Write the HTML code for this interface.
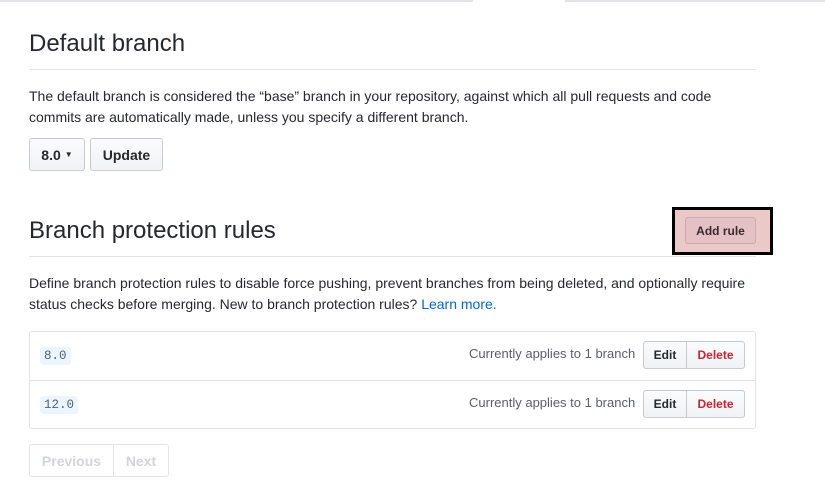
<!DOCTYPE html>
<html><head><style>
body{margin:0;width:825px;height:496px;background:#fff;font-family:"Liberation Sans",sans-serif;color:#24292e;position:relative;overflow:hidden}
.a{position:absolute}
.topbar{top:0;height:2px;background:#e1e4e8}
h2{position:absolute;margin:0;font-weight:400;font-size:24px;left:29px}
.hr{position:absolute;left:29px;width:727px;height:1px;background:#e1e4e8}
p{position:absolute;margin:0;left:29px;width:730px;font-size:14px;line-height:21px}
.btn{position:absolute;box-sizing:border-box;border:1px solid rgba(27,31,35,.2);border-radius:3px;background:linear-gradient(#fafbfc,#eff3f6);font-weight:bold;font-size:14px;display:flex;align-items:center;justify-content:center}
.sm{font-size:12px}
code{font-family:"Liberation Mono",monospace;font-size:12.5px;background:#eaf5ff;color:#586069;padding:2px 4px;border-radius:3px}
</style></head><body>
<div class="a topbar" style="left:0;width:473px"></div>
<div class="a topbar" style="left:565px;width:260px"></div>
<h2 style="top:30px">Default branch</h2>
<div class="hr" style="top:69px"></div>
<p style="top:86px">The default branch is considered the “base” branch in your repository, against which all pull requests and code commits are automatically made, unless you specify a different branch.</p>
<div class="btn" style="left:29px;top:138px;width:56px;height:33px">8.0 <span style="font-size:8px;margin-left:4px">▼</span></div>
<div class="btn" style="left:90px;top:138px;width:73px;height:33px">Update</div>
<h2 style="top:217px">Branch protection rules</h2>
<div class="hr" style="top:256px"></div>
<div class="a" style="left:672px;top:207px;width:101px;height:48px;box-sizing:border-box;border:3px solid #000;background:#ecc9c9"></div>
<div class="btn sm" style="left:685px;top:217px;width:71px;height:27px;background:#e3c1c4;border-color:#cfa9ad;color:#3a2a2e">Add rule</div>
<p style="top:273px">Define branch protection rules to disable force pushing, prevent branches from being deleted, and optionally require status checks before merging. New to branch protection rules? <span style="color:#0366d6">Learn more.</span></p>
<div class="a" style="left:29px;top:331px;width:727px;height:98px;box-sizing:border-box;border:1px solid #e1e4e8;border-radius:3px"></div>
<div class="a" style="left:30px;top:380px;width:725px;height:1px;background:#e1e4e8"></div>
<div class="a" style="left:40px;top:346px"><code>8.0</code></div>
<div class="a" style="left:40px;top:395px"><code>12.0</code></div>
<div class="a" style="left:469px;top:346px;font-size:13px;color:#586069">Currently applies to 1 branch</div>
<div class="a" style="left:469px;top:395px;font-size:13px;color:#586069">Currently applies to 1 branch</div>
<div class="btn sm" style="left:643px;top:341px;width:44px;height:28px;border-radius:3px 0 0 3px">Edit</div>
<div class="btn sm" style="left:686px;top:341px;width:59px;height:28px;border-radius:0 3px 3px 0;color:#cb2431">Delete</div>
<div class="btn sm" style="left:643px;top:390px;width:44px;height:28px;border-radius:3px 0 0 3px">Edit</div>
<div class="btn sm" style="left:686px;top:390px;width:59px;height:28px;border-radius:0 3px 3px 0;color:#cb2431">Delete</div>
<div class="btn" style="left:29px;top:444px;width:85px;height:33px;background:#fff;border-color:#e1e4e8;color:#d1d5da;border-radius:3px 0 0 3px">Previous</div>
<div class="btn" style="left:113px;top:444px;width:56px;height:33px;background:#fff;border-color:#e1e4e8;color:#d1d5da;border-radius:0 3px 3px 0">Next</div>
</body></html>
